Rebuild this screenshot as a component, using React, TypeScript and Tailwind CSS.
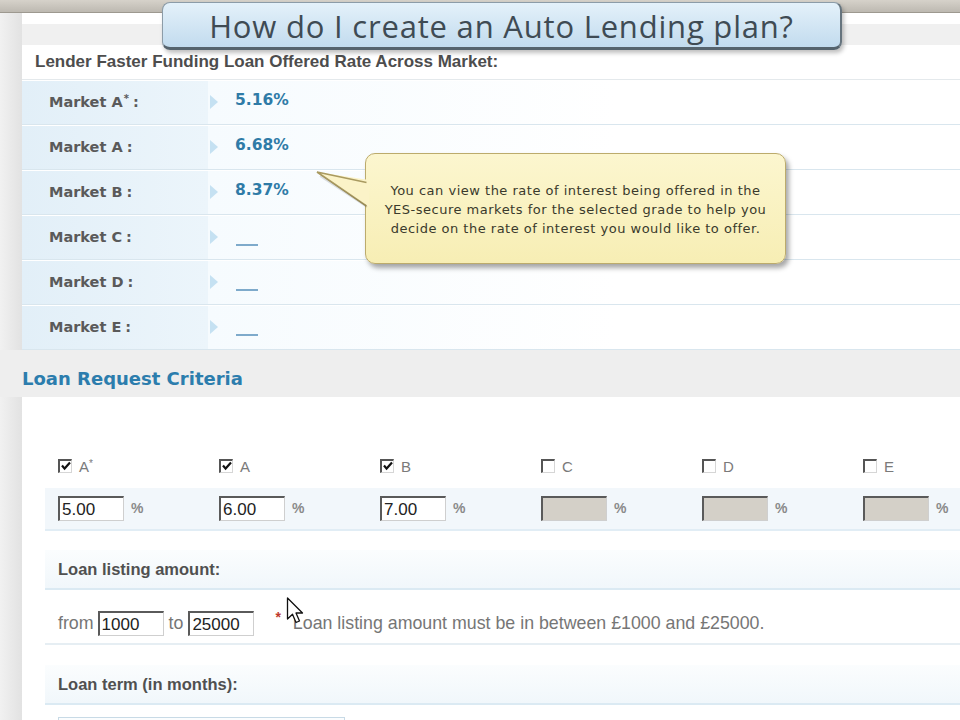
import React from "react";

const arial = "font-['Liberation_Sans',Arial,sans-serif]";
const dv = "font-['DejaVu_Sans',Verdana,sans-serif]";

const markets = [
  { name: "A", star: true, value: "5.16%" },
  { name: "A", star: false, value: "6.68%" },
  { name: "B", star: false, value: "8.37%" },
  { name: "C", star: false, value: "" },
  { name: "D", star: false, value: "" },
  { name: "E", star: false, value: "" },
];

const grades = [
  { g: "A", star: true, checked: true, v: "5.00" },
  { g: "A", star: false, checked: true, v: "6.00" },
  { g: "B", star: false, checked: true, v: "7.00" },
  { g: "C", star: false, checked: false, v: "" },
  { g: "D", star: false, checked: false, v: "" },
  { g: "E", star: false, checked: false, v: "" },
];

function CheckBox({ checked }: { checked: boolean }) {
  return (
    <div className="relative w-[14px] h-[14px] bg-white border-t-2 border-l-2 border-[#555] border-b border-r border-b-[#d6d6d6] border-r-[#d6d6d6]">
      {checked && (
        <svg viewBox="0 0 12 12" className="absolute left-[0px] top-[-1px] w-[12px] h-[12px]">
          <path d="M2 5.5 L4.6 8.6 L10 2.6" fill="none" stroke="#111" strokeWidth="2.2" />
        </svg>
      )}
    </div>
  );
}

function ClassicInput({ value, disabled, w }: { value?: string; disabled?: boolean; w: string }) {
  return (
    <div
      className={`${w} h-[25px] flex items-center pl-[2px] border-t-2 border-l-2 border-[#5a5a5a] border-b border-r border-b-[#cfcfcf] border-r-[#cfcfcf] ${
        disabled ? "bg-[#d4d0c8]" : "bg-white"
      } ${arial} text-[17px] text-[#222] leading-none`}
    >
      {value}
    </div>
  );
}

export default function App() {
  return (
    <div className={`relative w-[960px] h-[720px] overflow-hidden bg-[#eeeeee] ${arial}`}>
      {/* browser chrome strip */}
      <div className="h-[13px] bg-gradient-to-b from-[#d6d2ca] to-[#bdb9b1] border-b border-[#9d9990]" />

      <div className="flex">
        {/* left gutter */}
        <div className="w-[22px] shrink-0 bg-gradient-to-r from-[#f1f1f1] to-[#e2e2e2]" />

        <div className="flex-1 flex flex-col">
          <div className="h-[11px] bg-white" />
          <div className="h-[21px] bg-[#f0f0f0]" />
          <div className="h-[35px] bg-white border-b border-[#e4e9ec] flex items-center pl-[13px]">
            <span className="text-[17px] font-bold text-[#4d4d4d]">
              Lender Faster Funding Loan Offered Rate Across Market:
            </span>
          </div>

          {/* market rows */}
          {markets.map((m, i) => (
            <div key={i} className="h-[45px] flex border-b border-[#d9e6ee] border-t border-t-white">
              <div className={`w-[186px] shrink-0 bg-gradient-to-r from-[#e2eff8] to-[#ecf5fb] flex items-center pl-[27px] ${dv} text-[14.5px] font-bold text-[#5a5a5a]`}>
                Market {m.name}
                {m.star && <span className="text-[10px] relative top-[-4px] ml-[1px]">*</span>}
                <span className="ml-[4px]">:</span>
              </div>
              <div className="flex-1 flex items-center bg-gradient-to-r from-[#f6fbfe] via-white to-white">
                <svg viewBox="0 0 8 14" className="w-[8px] h-[14px] ml-[2px] -mt-[2px]">
                  <path d="M0 0 L8 7 L0 14 Z" fill="#c5e1f2" />
                </svg>
                {m.value ? (
                  <span className={`ml-[17px] -mt-[4px] ${dv} text-[15.5px] font-bold text-[#2f7ba7]`}>{m.value}</span>
                ) : (
                  <div className="ml-[18px] mt-[14px] w-[22px] h-[2px] bg-[#7eaacb]" />
                )}
              </div>
            </div>
          ))}

          {/* Loan request criteria heading */}
          <div className="h-[47px] bg-[#eeeeee] flex items-end pb-[5px] -ml-[22px] pl-[22px]">
            <span className={`${dv} text-[18px] font-bold text-[#2c7dad]`}>Loan Request Criteria</span>
          </div>

          {/* white panel */}
          <div className="bg-white pl-[23px] flex flex-col">
            <div className="h-[91px] flex items-end pb-[15px] pl-[13px]">
              {grades.map((g, i) => (
                <div key={i} className="w-[161px] shrink-0 flex items-end gap-[7px]">
                  <CheckBox checked={g.checked} />
                  <span className={`text-[15px] text-[#7a7a7a] leading-none -mb-[1px]`}>
                    {g.g}
                    {g.star && <span className="text-[10px] relative top-[-5px]">*</span>}
                  </span>
                </div>
              ))}
            </div>
            <div className="h-[43px] bg-[#f2f7fb] border-b-2 border-[#e1edf5] flex items-center pl-[13px]">
              {grades.map((g, i) => (
                <div key={i} className="w-[161px] shrink-0 flex items-center gap-[7px]">
                  <ClassicInput value={g.v} disabled={!g.checked} w="w-[66px]" />
                  <span className="text-[14px] font-bold text-[#8a8a8a]">%</span>
                </div>
              ))}
            </div>

            <div className="h-[19px]" />
            <div className="h-[40px] bg-gradient-to-b from-[#fbfdfe] to-[#f1f7fb] border-b-2 border-[#dbeaf3] flex items-center pl-[13px]">
              <span className="text-[16.5px] font-bold text-[#505050]">Loan listing amount:</span>
            </div>
            <div className="h-[55px] border-b-2 border-[#e6eef3] flex items-center pt-[14px] pl-[13px] text-[17.8px] text-[#767676]">
              <span className="mr-[4px]">from</span>
              <ClassicInput value="1000" w="w-[66px]" />
              <span className="mx-[5px]">to</span>
              <ClassicInput value="25000" w="w-[66px]" />
              <span className="ml-[21px] text-[#c0392b] text-[14px] font-bold relative -top-[6px]">*</span>
              <span className="ml-[12px]">Loan listing amount must be in between £1000 and £25000.</span>
            </div>

            <div className="h-[20px]" />
            <div className="h-[40px] bg-gradient-to-b from-[#fbfdfe] to-[#f1f7fb] border-b-2 border-[#dbeaf3] flex items-center pl-[13px]">
              <span className="text-[16.5px] font-bold text-[#505050]">Loan term (in months):</span>
            </div>
            <div className="h-[40px] pt-[12px] pl-[13px]">
              <div className="w-[287px] h-[26px] border border-[#c8dae6] bg-[#fbfdfe]" />
            </div>
          </div>
        </div>
      </div>

      {/* Title banner */}
      <div className="absolute left-[162px] top-[2px] w-[680px] h-[48px] rounded-[8px] bg-gradient-to-b from-[#e4f1fa] to-[#c2dbee] border border-[#8c9ca8] border-b-[3px] border-r-[2px] border-b-[#55636d] border-r-[#66747e] shadow-[2px_3px_4px_rgba(0,0,0,0.25)] flex items-center justify-center">
        <span className="font-['Open_Sans','Noto_Sans',sans-serif] text-[31px] tracking-[0.8px] text-[#3f4b54] leading-none mt-[2px]">
          How do I create an Auto Lending plan?
        </span>
      </div>

      {/* Tooltip */}
      <div className="absolute left-[365px] top-[153px] w-[421px] h-[111px] rounded-[10px] bg-gradient-to-b from-[#fcf6cf] to-[#f7eeb4] border-[1.5px] border-[#bcab6c] shadow-[3px_4px_5px_rgba(0,0,0,0.35)] flex items-center justify-center">
        <p className={`${dv} text-[13px] tracking-[0.5px] leading-[19px] text-[#3a3a2c] text-center mt-[2px]`}>
          You can view the rate of interest being offered in the
          <br />
          YES-secure markets for the selected grade to help you
          <br />
          decide on the rate of interest you would like to offer.
        </p>
      </div>
      <svg className="absolute left-[315px] top-[168px]" width="56" height="42" viewBox="0 0 56 42">
        <path d="M2 4 L54 12 L54 39 Z" fill="#fbf3c8" />
        <path d="M51.5 14.5 L2 4 L51.5 38" fill="none" stroke="#a99a60" strokeWidth="1.6" />
        <path d="M4 6 L51 37" fill="none" stroke="rgba(0,0,0,0.12)" strokeWidth="2" transform="translate(1,2)" />
      </svg>

      {/* mouse cursor */}
      <svg className="absolute left-[286px] top-[597px]" width="18" height="28" viewBox="0 0 18 28">
        <path d="M1.5 1 L1.5 22 L6.5 17.3 L10 25.5 L13.5 24 L10 16 L16.5 16 Z" fill="#fff" stroke="#111" strokeWidth="1.3" strokeLinejoin="round" />
      </svg>
    </div>
  );
}
